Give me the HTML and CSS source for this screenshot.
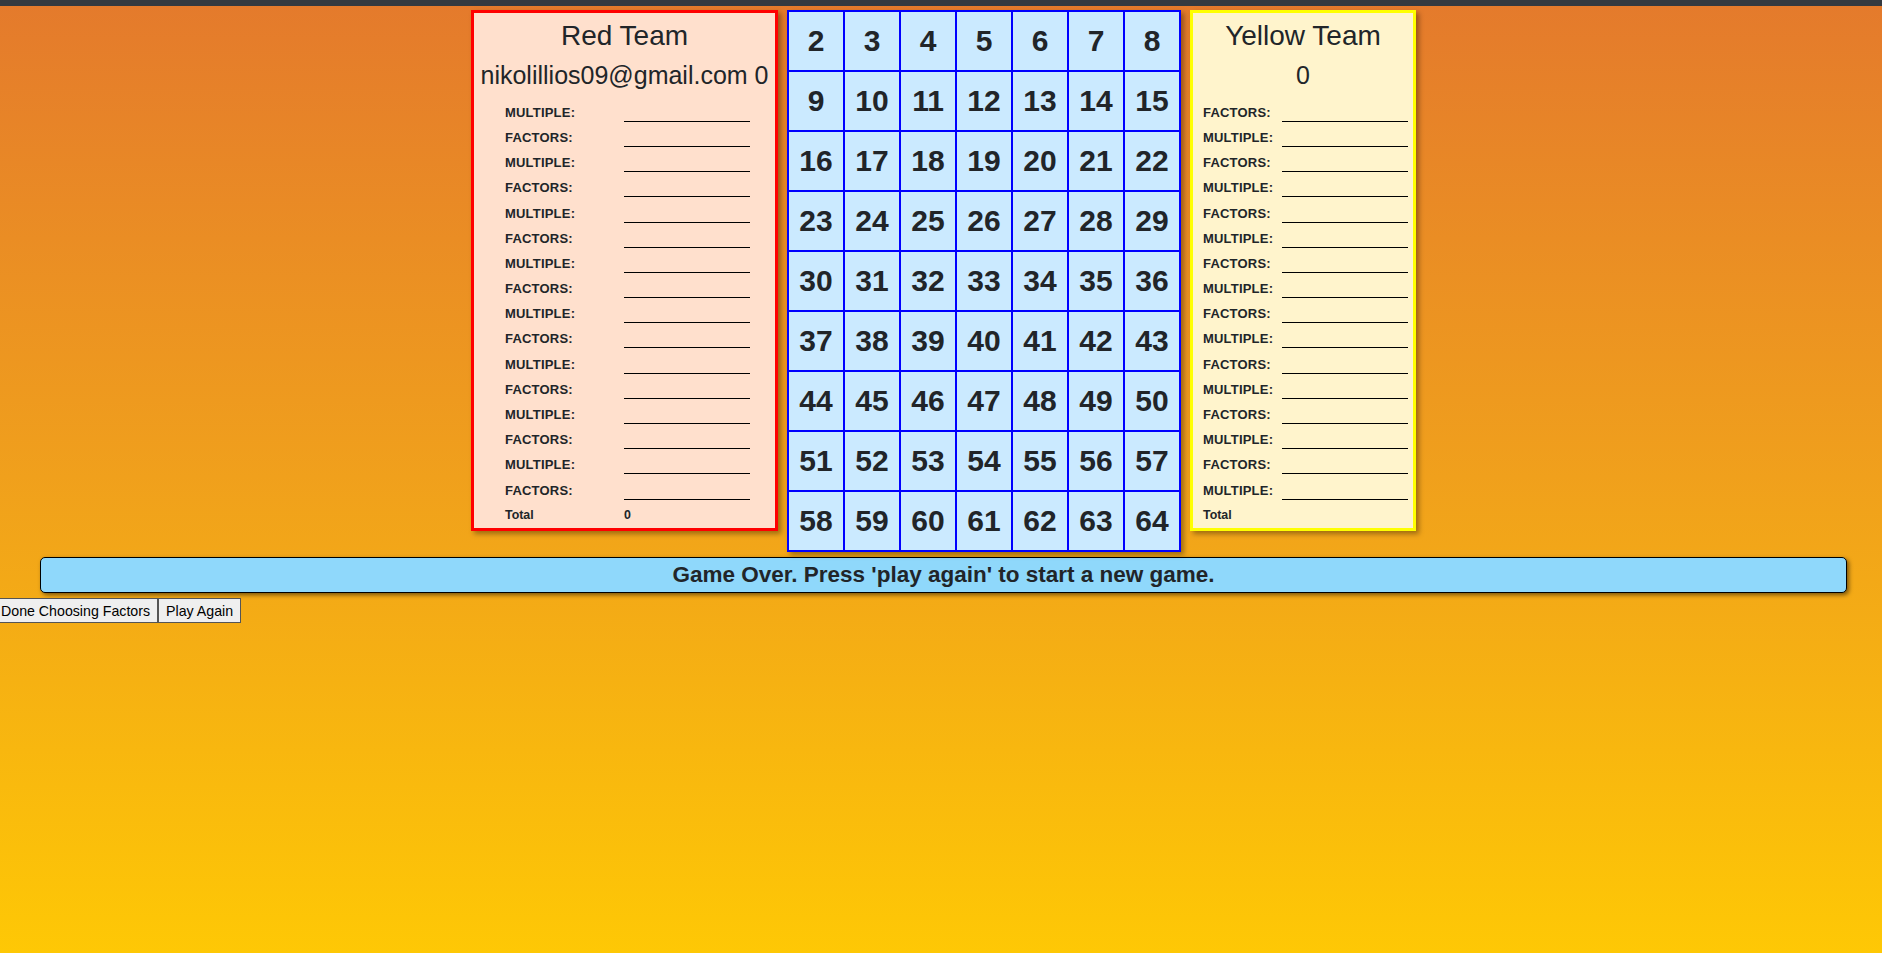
FILE: index.html
```html
<!DOCTYPE html>
<html>
<head>
<meta charset="utf-8">
<link rel="stylesheet" href="styles.css">
</head>
<body>
<div class="topbar"></div>
<div class="board">
  <div class="panel panel-red">
    <div class="team-title">Red Team</div>
    <div class="team-sub">nikolillios09@gmail.com 0</div>
    <div class="score-table">
      <div class="row"><span class="lbl">MULTIPLE:</span><span class="line"></span></div>
      <div class="row"><span class="lbl">FACTORS:</span><span class="line"></span></div>
      <div class="row"><span class="lbl">MULTIPLE:</span><span class="line"></span></div>
      <div class="row"><span class="lbl">FACTORS:</span><span class="line"></span></div>
      <div class="row"><span class="lbl">MULTIPLE:</span><span class="line"></span></div>
      <div class="row"><span class="lbl">FACTORS:</span><span class="line"></span></div>
      <div class="row"><span class="lbl">MULTIPLE:</span><span class="line"></span></div>
      <div class="row"><span class="lbl">FACTORS:</span><span class="line"></span></div>
      <div class="row"><span class="lbl">MULTIPLE:</span><span class="line"></span></div>
      <div class="row"><span class="lbl">FACTORS:</span><span class="line"></span></div>
      <div class="row"><span class="lbl">MULTIPLE:</span><span class="line"></span></div>
      <div class="row"><span class="lbl">FACTORS:</span><span class="line"></span></div>
      <div class="row"><span class="lbl">MULTIPLE:</span><span class="line"></span></div>
      <div class="row"><span class="lbl">FACTORS:</span><span class="line"></span></div>
      <div class="row"><span class="lbl">MULTIPLE:</span><span class="line"></span></div>
      <div class="row"><span class="lbl">FACTORS:</span><span class="line"></span></div>
      <div class="row"><span class="lbl total">Total</span><span class="lbl total">0</span></div>
    </div>
  </div>

  <div class="grid">
    <div class="cell">2</div><div class="cell">3</div><div class="cell">4</div><div class="cell">5</div><div class="cell">6</div><div class="cell">7</div><div class="cell">8</div>
    <div class="cell">9</div><div class="cell">10</div><div class="cell">11</div><div class="cell">12</div><div class="cell">13</div><div class="cell">14</div><div class="cell">15</div>
    <div class="cell">16</div><div class="cell">17</div><div class="cell">18</div><div class="cell">19</div><div class="cell">20</div><div class="cell">21</div><div class="cell">22</div>
    <div class="cell">23</div><div class="cell">24</div><div class="cell">25</div><div class="cell">26</div><div class="cell">27</div><div class="cell">28</div><div class="cell">29</div>
    <div class="cell">30</div><div class="cell">31</div><div class="cell">32</div><div class="cell">33</div><div class="cell">34</div><div class="cell">35</div><div class="cell">36</div>
    <div class="cell">37</div><div class="cell">38</div><div class="cell">39</div><div class="cell">40</div><div class="cell">41</div><div class="cell">42</div><div class="cell">43</div>
    <div class="cell">44</div><div class="cell">45</div><div class="cell">46</div><div class="cell">47</div><div class="cell">48</div><div class="cell">49</div><div class="cell">50</div>
    <div class="cell">51</div><div class="cell">52</div><div class="cell">53</div><div class="cell">54</div><div class="cell">55</div><div class="cell">56</div><div class="cell">57</div>
    <div class="cell">58</div><div class="cell">59</div><div class="cell">60</div><div class="cell">61</div><div class="cell">62</div><div class="cell">63</div><div class="cell">64</div>
  </div>

  <div class="panel panel-yellow">
    <div class="team-title">Yellow Team</div>
    <div class="team-sub">0</div>
    <div class="score-table">
      <div class="row"><span class="lbl">FACTORS:</span><span class="line"></span></div>
      <div class="row"><span class="lbl">MULTIPLE:</span><span class="line"></span></div>
      <div class="row"><span class="lbl">FACTORS:</span><span class="line"></span></div>
      <div class="row"><span class="lbl">MULTIPLE:</span><span class="line"></span></div>
      <div class="row"><span class="lbl">FACTORS:</span><span class="line"></span></div>
      <div class="row"><span class="lbl">MULTIPLE:</span><span class="line"></span></div>
      <div class="row"><span class="lbl">FACTORS:</span><span class="line"></span></div>
      <div class="row"><span class="lbl">MULTIPLE:</span><span class="line"></span></div>
      <div class="row"><span class="lbl">FACTORS:</span><span class="line"></span></div>
      <div class="row"><span class="lbl">MULTIPLE:</span><span class="line"></span></div>
      <div class="row"><span class="lbl">FACTORS:</span><span class="line"></span></div>
      <div class="row"><span class="lbl">MULTIPLE:</span><span class="line"></span></div>
      <div class="row"><span class="lbl">FACTORS:</span><span class="line"></span></div>
      <div class="row"><span class="lbl">MULTIPLE:</span><span class="line"></span></div>
      <div class="row"><span class="lbl">FACTORS:</span><span class="line"></span></div>
      <div class="row"><span class="lbl">MULTIPLE:</span><span class="line"></span></div>
      <div class="row"><span class="lbl total">Total</span><span class="lbl total"></span></div>
    </div>
  </div>
</div>

<div class="message">Game Over. Press 'play again' to start a new game.</div>

<div class="actions">
  <button class="btn">Done Choosing Factors</button><button class="btn">Play Again</button>
</div>
</body>
</html>
```

FILE: styles.css
```css
html, body {
  margin: 0;
  padding: 0;
}

body {
  min-height: 953px;
  font-family: "Liberation Sans", Arial, sans-serif;
  color: #212529;
  background: linear-gradient(180deg, #e47a2c 0%, #f0a01c 50%, #fec805 100%);
}

.topbar {
  height: 6px;
  background: #343a40;
}

.board {
  display: flex;
  justify-content: center;
  align-items: flex-start;
  gap: 9px;
  padding: 4px 0 0 5px;
}

.panel {
  box-sizing: border-box;
  border: 3px solid;
  padding: 6px 0 3px;
  box-shadow: 3px 3px 5px rgba(0, 0, 0, 0.35);
}

.panel-red {
  width: 307px;
  background: #ffe0cd;
  border-color: #ff0000;
}

.panel-yellow {
  width: 226px;
  background: #fff4cc;
  border-color: #ffff00;
}

.team-title {
  font-size: 28px;
  line-height: 33.6px;
  text-align: center;
  white-space: nowrap;
}

.team-sub {
  margin-top: 7px;
  font-size: 25px;
  line-height: 30px;
  text-align: center;
  white-space: nowrap;
}

.score-table {
  margin-top: 7px;
  display: flex;
  flex-direction: column;
}

.panel-red .score-table {
  padding-left: 31px;
}

.panel-yellow .score-table {
  padding-left: 10px;
}

.row {
  display: grid;
  height: 25.2px;
}

.panel-red .row {
  grid-template-columns: 119px 126px;
}

.panel-yellow .row {
  grid-template-columns: 79px 126px;
}

.lbl {
  align-self: end;
  margin-bottom: 2px;
  font-size: 13px;
  line-height: 15px;
  font-weight: bold;
  letter-spacing: 0.2px;
  white-space: nowrap;
}

.lbl.total {
  font-size: 12.4px;
  letter-spacing: 0;
}

.line {
  border-bottom: 1px solid #000;
}

.grid {
  display: grid;
  grid-template-columns: repeat(7, 54px);
  grid-auto-rows: 58px;
  gap: 2px;
  padding: 2px;
  background: #0000ff;
  box-shadow: 3px 3px 5px rgba(0, 0, 0, 0.35);
}

.cell {
  display: flex;
  align-items: center;
  justify-content: center;
  background: #cbeaff;
  font-size: 30px;
  font-weight: bold;
}

.message {
  box-sizing: border-box;
  height: 36px;
  margin: 5px 35px 0 40px;
  border: 1px solid #000;
  border-radius: 5px;
  background: #8fd8fb;
  box-shadow: 2px 2px 4px rgba(0, 0, 0, 0.5);
  font-size: 22.5px;
  font-weight: bold;
  line-height: 34px;
  text-align: center;
}

.actions {
  display: flex;
  margin: 5px 0 0 -7px;
}

.btn {
  box-sizing: border-box;
  height: 25px;
  padding: 0 7px;
  margin: 0;
  border: 1px solid #555;
  border-radius: 0;
  background: #efefef;
  color: #000;
  font-family: "Liberation Sans", Arial, sans-serif;
  font-size: 14.2px;
}
```
